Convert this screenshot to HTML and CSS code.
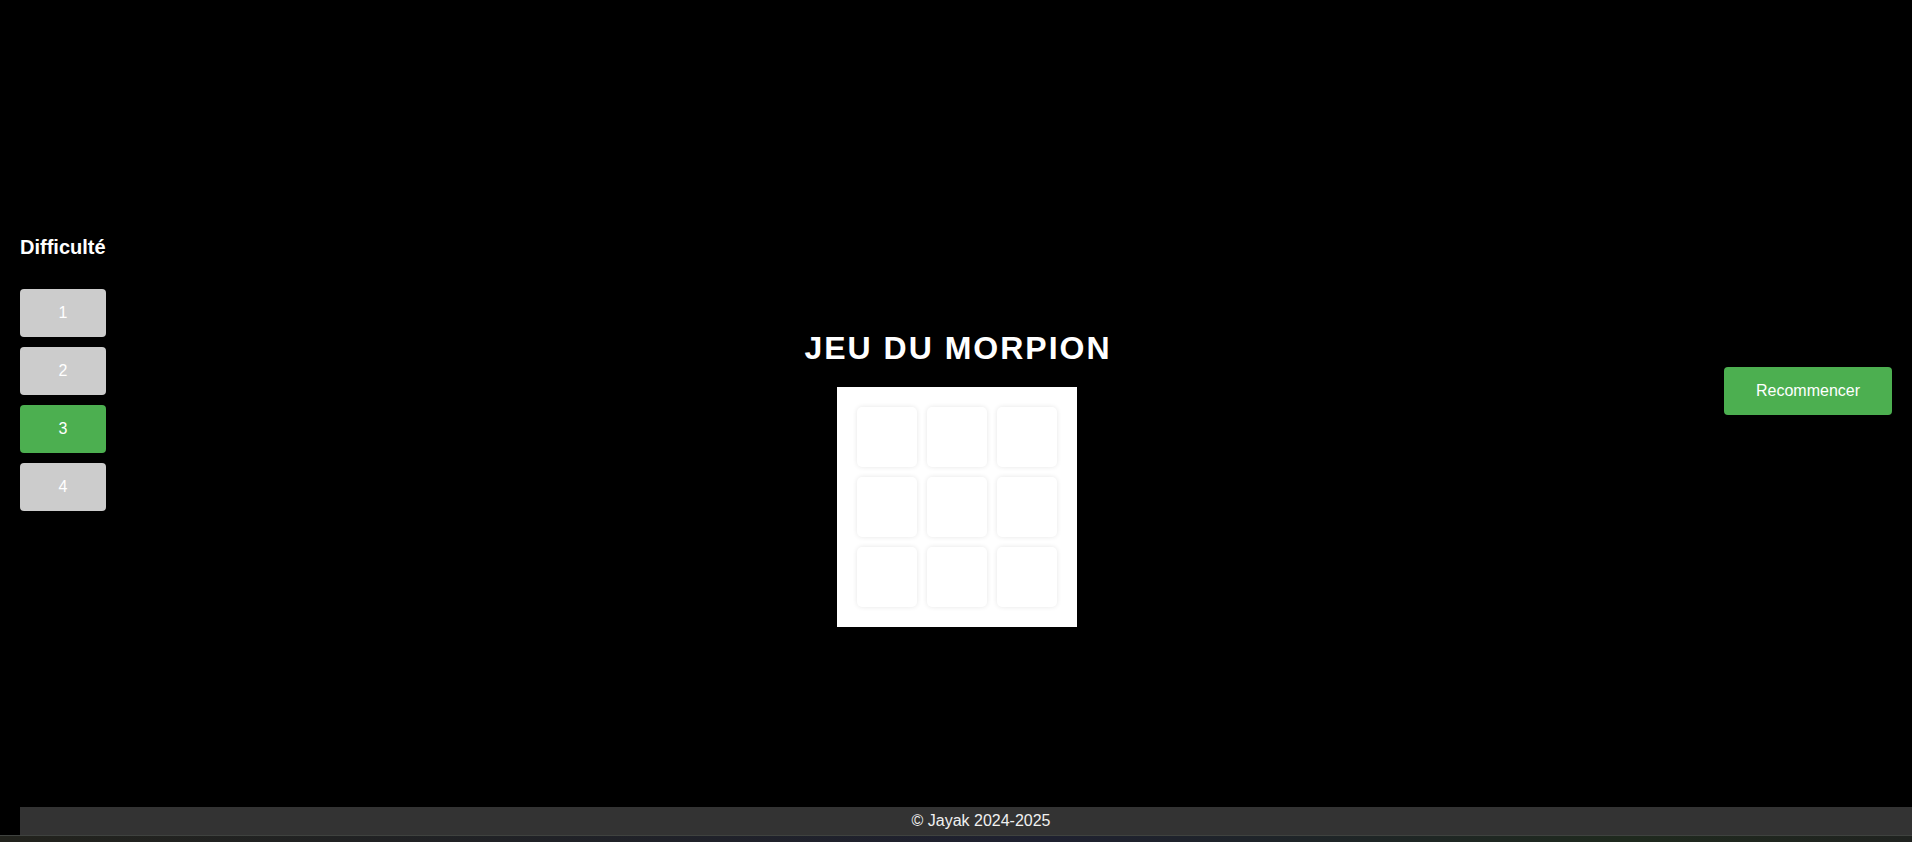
FILE: index.html
```html
<!DOCTYPE html>
<html lang="fr">
<head>
<meta charset="utf-8">
<title>Jeu du Morpion</title>
<link rel="stylesheet" href="styles.css">
</head>
<body>
<div class="page">
  <div class="main">
    <aside class="sidebar">
      <h3 class="side-title">Difficulté</h3>
      <div class="levels">
        <button class="level">1</button>
        <button class="level">2</button>
        <button class="level active">3</button>
        <button class="level">4</button>
      </div>
    </aside>
    <section class="game">
      <h1 class="title">JEU DU MORPION</h1>
      <div class="board">
        <div class="cell"></div><div class="cell"></div><div class="cell"></div>
        <div class="cell"></div><div class="cell"></div><div class="cell"></div>
        <div class="cell"></div><div class="cell"></div><div class="cell"></div>
      </div>
    </section>
    <aside class="actions">
      <button class="restart">Recommencer</button>
    </aside>
  </div>
  <footer class="footer">© Jayak 2024-2025</footer>
  <div class="desk"></div>
</div>
</body>
</html>
```
FILE: styles.css
```css
html, body {
  margin: 0;
  padding: 0;
  background: #000;
  overflow: hidden;
}
body {
  font-family: "Liberation Sans", Arial, sans-serif;
  color: #fff;
}
.page {
  display: flex;
  flex-direction: column;
  height: 842px;
}
.main {
  height: 807px;
  display: grid;
  grid-template-columns: 1fr auto 1fr;
  padding: 0 20px;
}
.sidebar {
  justify-self: start;
  padding-top: 236px;
  width: 86px;
}
.side-title {
  margin: 0 0 30px;
  font-size: 20px;
  line-height: 23px;
  font-weight: bold;
  color: #fff;
}
.levels {
  display: flex;
  flex-direction: column;
  gap: 10px;
}
.level {
  width: 86px;
  height: 48px;
  border: none;
  border-radius: 4px;
  background: #cccccc;
  color: #fff;
  font-family: "Liberation Sans", Arial, sans-serif;
  font-size: 16px;
  padding: 0;
}
.level.active {
  background: #4caf50;
}
.game {
  display: flex;
  flex-direction: column;
  align-items: center;
  padding-top: 330px;
  padding-left: 2px;
}
.title {
  margin: 0 0 20px;
  font-size: 32px;
  line-height: 37px;
  font-weight: bold;
  letter-spacing: 2px;
  color: #fff;
  padding-left: 2px;
}
.board {
  width: 240px;
  height: 240px;
  box-sizing: border-box;
  background: #fff;
  padding: 20px;
  display: grid;
  grid-template-columns: repeat(3, 60px);
  grid-template-rows: repeat(3, 60px);
  gap: 10px;
}
.cell {
  background: #fff;
  border-radius: 5px;
  box-shadow: 0 0 5px rgba(0, 0, 0, 0.1);
}
.actions {
  justify-self: end;
  padding-top: 367px;
}
.restart {
  width: 168px;
  height: 48px;
  border: none;
  border-radius: 4px;
  background: #4caf50;
  color: #fff;
  font-family: "Liberation Sans", Arial, sans-serif;
  font-size: 16px;
  padding: 0;
}
.footer {
  margin-left: 20px;
  height: 28px;
  line-height: 28px;
  background: #333333;
  color: #f0f0f0;
  font-size: 16px;
  text-align: center;
  padding-left: 30px;
}
.desk {
  flex: 1;
  border-top: 1px solid #3f423f;
  background: linear-gradient(90deg, #22231d 0%, #1f2130 55%, #1f2a1e 85%, #202320 100%);
}
```
